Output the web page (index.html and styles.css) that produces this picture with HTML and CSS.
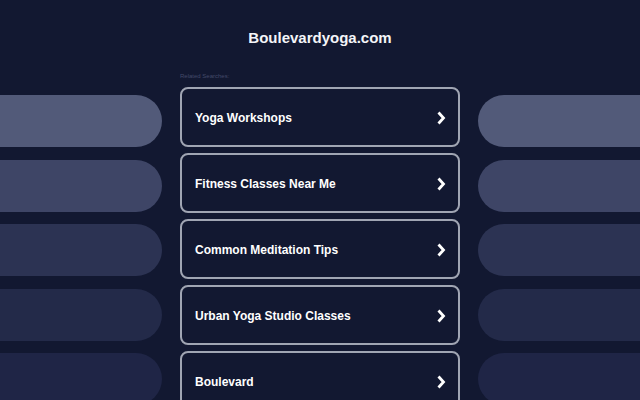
FILE: index.html
```html
<!DOCTYPE html>
<html lang="en">
<head>
<meta charset="utf-8">
<title>Boulevardyoga.com</title>
<link rel="stylesheet" href="styles.css">
</head>
<body>
<header class="header">
  <h1 class="title">Boulevardyoga.com</h1>
</header>
<main class="layout">
  <div class="side side-left">
    <div class="bar bar-1"></div>
    <div class="bar bar-2"></div>
    <div class="bar bar-3"></div>
    <div class="bar bar-4"></div>
    <div class="bar bar-5"></div>
  </div>
  <section class="center">
    <div class="label">Related Searches:</div>
    <a class="card" href="#"><span class="card-text">Yoga Workshops</span><svg class="chev" viewBox="0 0 10 16" width="10" height="16"><path d="M2.5 2.5 L7.5 8 L2.5 13.5"/></svg></a>
    <a class="card" href="#"><span class="card-text">Fitness Classes Near Me</span><svg class="chev" viewBox="0 0 10 16" width="10" height="16"><path d="M2.5 2.5 L7.5 8 L2.5 13.5"/></svg></a>
    <a class="card" href="#"><span class="card-text">Common Meditation Tips</span><svg class="chev" viewBox="0 0 10 16" width="10" height="16"><path d="M2.5 2.5 L7.5 8 L2.5 13.5"/></svg></a>
    <a class="card" href="#"><span class="card-text">Urban Yoga Studio Classes</span><svg class="chev" viewBox="0 0 10 16" width="10" height="16"><path d="M2.5 2.5 L7.5 8 L2.5 13.5"/></svg></a>
    <a class="card" href="#"><span class="card-text">Boulevard</span><svg class="chev" viewBox="0 0 10 16" width="10" height="16"><path d="M2.5 2.5 L7.5 8 L2.5 13.5"/></svg></a>
  </section>
  <div class="side side-right">
    <div class="bar bar-1"></div>
    <div class="bar bar-2"></div>
    <div class="bar bar-3"></div>
    <div class="bar bar-4"></div>
    <div class="bar bar-5"></div>
  </div>
</main>
</body>
</html>
```
FILE: styles.css
```css
html, body {
  margin: 0;
  padding: 0;
}
body {
  background: #121831;
  font-family: "Liberation Sans", Arial, sans-serif;
  color: #ffffff;
  height: 400px;
  overflow: hidden;
}
.header {
  padding-top: 29px;
  text-align: center;
}
.title {
  margin: 0;
  font-size: 15px;
  line-height: 18px;
  font-weight: bold;
  color: #f4f5f8;
}
.layout {
  margin-top: 23px;
  display: grid;
  grid-template-columns: 162px 280px 162px;
  column-gap: 18px;
  align-items: start;
}
.side {
  display: flex;
  flex-direction: column;
  gap: 12.5px;
  padding-top: 25px;
}
.bar {
  height: 52px;
}
.side-left .bar {
  border-radius: 0 26px 26px 0;
}
.side-right .bar {
  border-radius: 26px 0 0 26px;
}
.bar-1 { background: #525a79; }
.bar-2 { background: #3e4566; }
.bar-3 { background: #2c3353; }
.bar-4 { background: #232a49; }
.bar-5 { background: #1f2546; }
.center {
  display: flex;
  flex-direction: column;
}
.label {
  box-sizing: border-box;
  height: 10px;
  padding-top: 1px;
  margin-bottom: 7px;
  font-size: 6px;
  line-height: 11px;
  color: #434a69;
}
.card {
  box-sizing: border-box;
  height: 60px;
  margin-bottom: 6px;
  border: 2px solid #a0a5b3;
  border-radius: 8px;
  background: #121831;
  display: flex;
  align-items: center;
  justify-content: space-between;
  padding: 1px 12px 0 13px;
  text-decoration: none;
  color: #ffffff;
}
.card-text {
  font-size: 12px;
  font-weight: bold;
}
.chev {
  display: block;
  fill: none;
  stroke: #ffffff;
  stroke-width: 2.8;
  stroke-linejoin: miter;
  stroke-linecap: butt;
}
```
